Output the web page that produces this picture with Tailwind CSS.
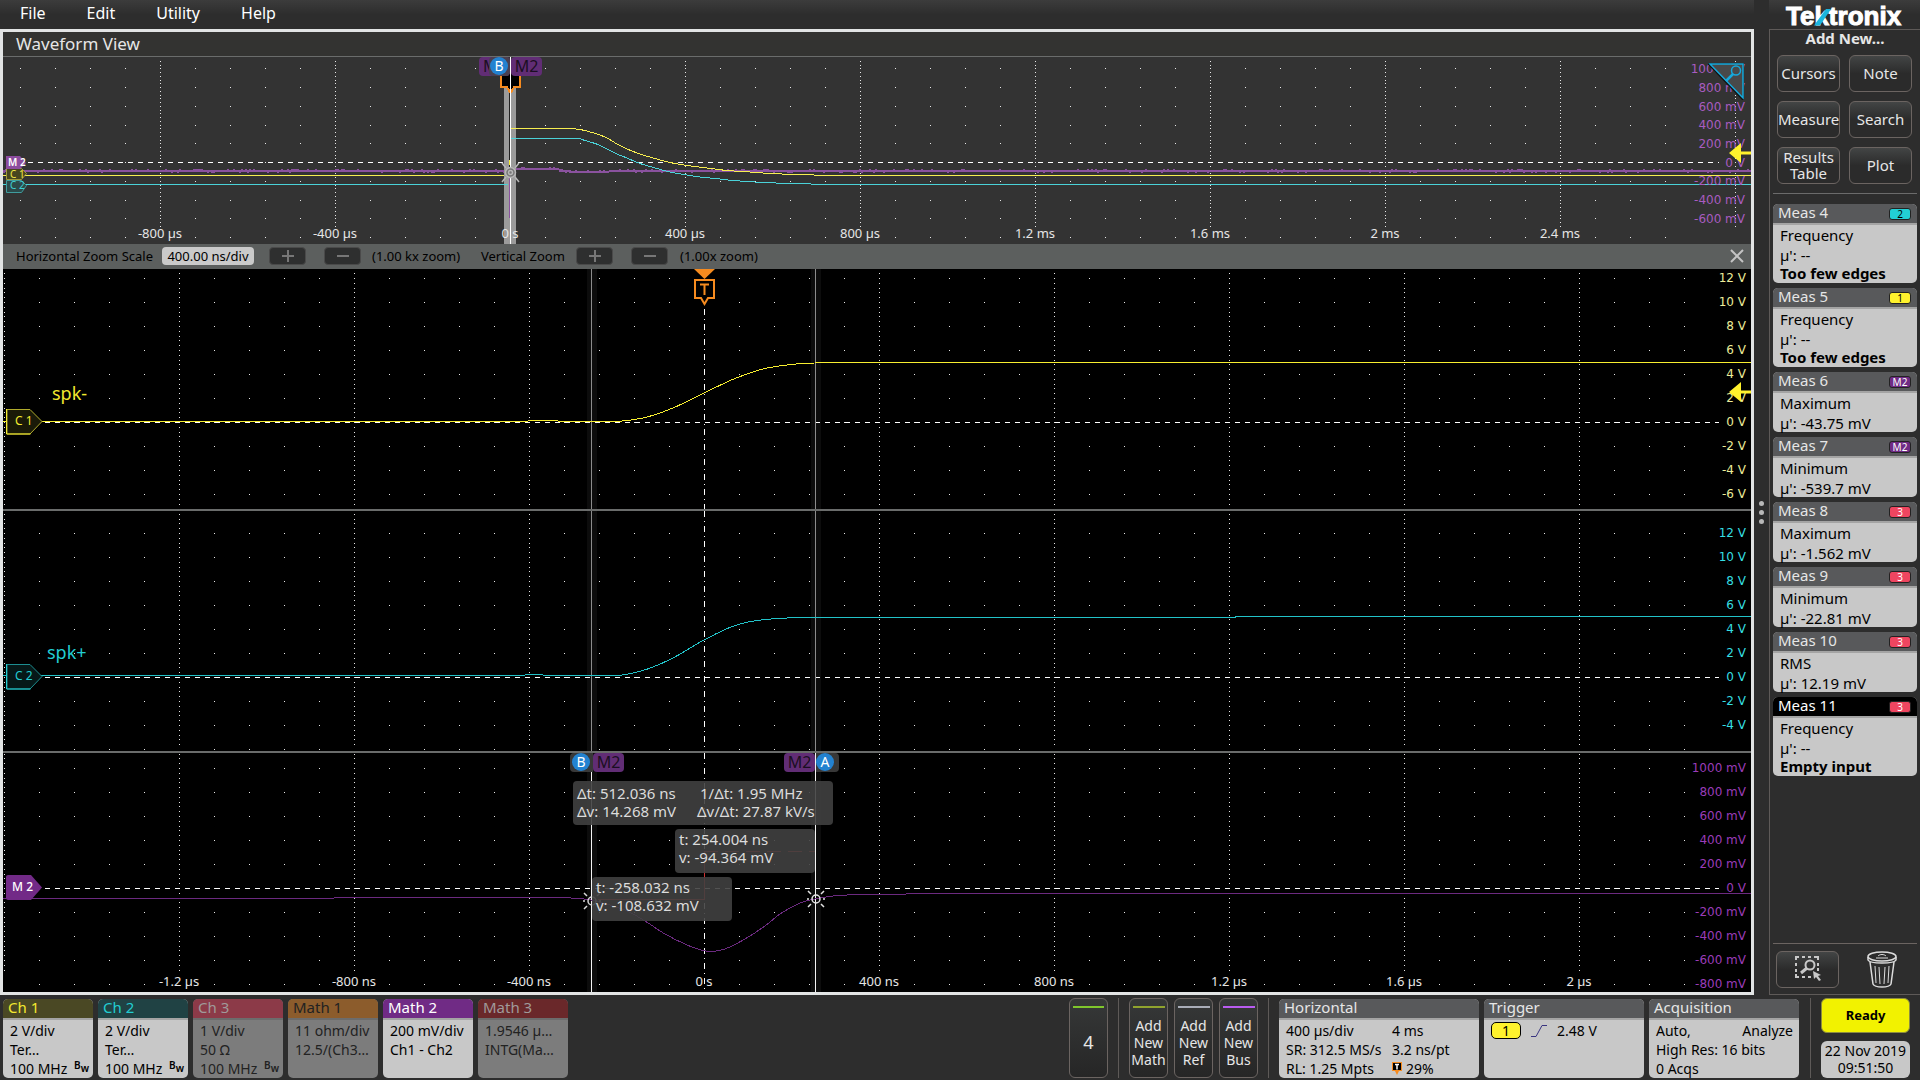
<!DOCTYPE html>
<html lang="en">
<head>
    <meta charset="UTF-8">
    <meta name="viewport" content="width=device-width, initial-scale=1.0">
    <title>Tektronix - Waveform View</title>
    <script src="https://cdn.jsdelivr.net/npm/@tailwindcss/browser@4"></script>
</head>
<body class="min-h-screen flex flex-col bg-[#2d2d2d] text-[#e6e6e6] font-['Noto_Sans',sans-serif] text-[14px] leading-[19px]">

    <div class="flex-1 flex">
        <!-- Left: menu and waveform view -->
        <div class="flex-1 min-w-0 flex flex-col">
            <nav class="h-[29px] flex items-center gap-[41px] pl-5 pb-[2px] text-[16px] text-white bg-linear-to-b from-[#3c3c3c] to-[#2d2d2d] to-50%">
                <a href="#">File</a>
                <a href="#">Edit</a>
                <a href="#">Utility</a>
                <a href="#">Help</a>
            </nav>

            <main class="flex-1 flex flex-col border-3 border-[#e2e4e4] bg-black">
                <h1 class="h-[25px] pl-[13px] text-[17px] leading-[24px] bg-[#333331] border-b border-[#6a6c6b]">Waveform View</h1>

                <!-- Overview -->
                <section class="relative h-[187px] bg-[#333]">
                    <svg id="overview" class="absolute inset-0 w-full h-full" viewBox="0 0 1748 187" preserveAspectRatio="none" fill="none" shape-rendering="crispEdges"></svg>
                    <ul id="overviewScale" class="absolute right-[6px] top-[3px] h-[168px] grid auto-rows-fr items-center text-right text-[12px] leading-[18px] text-[#a85cc0] font-['DejaVu_Sans',sans-serif]"></ul>
                    <div id="overviewTime" class="absolute inset-x-0 bottom-[2px] h-[18px] text-[13px] leading-[18px]"></div>

                    <div class="absolute left-[3px] top-[98px] text-[11px]">
                        <svg class="w-[22px] h-[40px]" viewBox="0 0 22 40">
                            <path d="M0.5 13.5h15l5 5-5 6h-15z" fill="#48461f" stroke="#a09a3a"/>
                            <path d="M0.5 25.5h15l5 5-5 7h-15z" fill="#2c4a4a" stroke="#3f9c9e"/>
                            <path d="M0 1h14l6 7-6 6H0z" fill="#8c4c9e"/>
                            <text x="2" y="11" font-size="10" font-weight="600" fill="#fff">M 2</text>
                            <text x="4" y="23" font-size="10" fill="#f2e84a">C 1</text>
                            <text x="4" y="34" font-size="10" fill="#3fd0d4">C 2</text>
                        </svg>
                    </div>

                    <div data-x="476" class="absolute top-0 w-[31px] h-[19px] rounded bg-[#612d75] text-[#1b0f22] text-[16px] leading-[18px] pl-[4px]">M</div>
                    <div data-x="486" class="absolute top-0 w-[21px] h-[19px] rounded bg-[#4a4050]"></div>
                    <div data-x="487" class="absolute top-0 size-[18px] rounded-full bg-[#2382d0] text-[14px] leading-[18px] text-center text-white">B</div>
                    <div data-x="508" class="absolute top-0 w-[31px] h-[19px] rounded bg-[#612d75] text-[#1b0f22] text-[16px] leading-[18px] text-center">M2</div>

                    <button class="absolute right-[7px] top-[6px]" aria-label="Zoom overview">
                        <svg class="w-[36px] h-[37px]" viewBox="0 0 36 37" fill="none">
                            <path d="M2 1h33v34z" fill="#48494a" stroke="#111" stroke-width="4"/>
                            <path d="M2 1h33v34z" fill="#48494a" stroke="#16a9dc" stroke-width="1.5"/>
                            <circle cx="28" cy="7.500" r="4.500" stroke="#16a9dc" stroke-width="1.5"/>
                            <path d="M25 11l-7 7" stroke="#16a9dc" stroke-width="2.5"/>
                        </svg>
                    </button>
                    <svg class="absolute right-0 top-[86px] w-[22px] h-[20px]" viewBox="0 0 22 20"><path d="M0 10L12 0v8.500h10v3H12V20z" fill="#fff22d"/></svg>
                </section>

                <!-- Zoom bar -->
                <div class="h-[25px] flex items-center pl-[13px] pr-[7px] pb-px bg-[#5c5f5e] text-[13px] text-black">
                    <label for="hscale" class="w-[146px]">Horizontal Zoom Scale</label>
                    <input id="hscale" value="400.00 ns/div" class="w-[92px] h-[18px] rounded-sm bg-[#cacaca] text-center text-[13px]">
                    <button class="ml-[15px] w-[37px] h-[18px] rounded-sm bg-[#2e2f2f] border border-[#4a4a4a] grid place-items-center" aria-label="Horizontal zoom in"><svg class="size-3" viewBox="0 0 12 12" stroke="#777" stroke-width="2"><path d="M6 0v12M0 6h12"/></svg></button>
                    <button class="ml-[18px] w-[37px] h-[18px] rounded-sm bg-[#2e2f2f] border border-[#4a4a4a] grid place-items-center" aria-label="Horizontal zoom out"><svg class="size-3" viewBox="0 0 12 12" stroke="#777" stroke-width="2"><path d="M0 6h12"/></svg></button>
                    <span class="ml-[11px] w-[109px]">(1.00 kx zoom)</span>
                    <span class="w-[95px]">Vertical Zoom</span>
                    <button class="w-[37px] h-[18px] rounded-sm bg-[#2e2f2f] border border-[#4a4a4a] grid place-items-center" aria-label="Vertical zoom in"><svg class="size-3" viewBox="0 0 12 12" stroke="#777" stroke-width="2"><path d="M6 0v12M0 6h12"/></svg></button>
                    <button class="ml-[18px] w-[37px] h-[18px] rounded-sm bg-[#2e2f2f] border border-[#4a4a4a] grid place-items-center" aria-label="Vertical zoom out"><svg class="size-3" viewBox="0 0 12 12" stroke="#777" stroke-width="2"><path d="M0 6h12"/></svg></button>
                    <span class="ml-3">(1.00x zoom)</span>
                    <button class="ml-auto" aria-label="Close zoom"><svg class="size-[14px]" viewBox="0 0 14 14" stroke="#c4c4c4" stroke-width="2"><path d="M1 1l12 12M13 1L1 13"/></svg></button>
                </div>

                <!-- Channel 1 -->
                <section class="relative flex-[240] min-h-[240px]">
                    <svg id="ch1" class="absolute inset-0 w-full h-full" viewBox="0 0 1748 240" preserveAspectRatio="none" fill="none" shape-rendering="crispEdges"></svg>
                    <ul id="ch1Scale" class="absolute right-[5px] -top-[3px] text-right text-[12px] leading-[24px] text-[#ecec9a] font-['DejaVu_Sans',sans-serif]"></ul>
                    <span class="absolute left-[49px] top-[112px] text-[18px] leading-[24px] text-[#f2e92f]">spk-</span>
                    <svg class="absolute left-[3px] top-[140px] w-[37px] h-[26px]" viewBox="0 0 37 26">
                        <path d="M1 0.500h23l12 12-12 12.500H1z" fill="#1a1a08" stroke="#b0aa2c"/><path d="M0.500 0v25h24" fill="none" stroke="#f5ec30"/>
                        <text x="9" y="16" font-size="12" fill="#f5ec30">C 1</text>
                    </svg>
                    <svg data-x="691" class="absolute top-0 w-[21px] h-[38px]" viewBox="0 0 21 38">
                        <path d="M0 0h21L10.500 10z" fill="#f68b1f"/>
                        <path d="M1 11h19v18h-6l-3.500 6L7 29H1z" fill="#000" stroke="#f68b1f" stroke-width="2"/>
                        <path d="M6 15.500h9M10.500 15v11" stroke="#f68b1f" stroke-width="2"/>
                    </svg>
                    <svg class="absolute right-0 top-[113px] w-[22px] h-[20px]" viewBox="0 0 22 20"><path d="M0 10L12 0v8.500h10v3H12V20z" fill="#fff22d"/></svg>
                </section>

                <!-- Channel 2 -->
                <section class="relative flex-[242] min-h-[242px] border-t-2 border-[#6a6c6b]">
                    <svg id="ch2" class="absolute inset-0 w-full h-full" viewBox="0 0 1748 240" preserveAspectRatio="none" fill="none" shape-rendering="crispEdges"></svg>
                    <ul id="ch2Scale" class="absolute right-[5px] top-[10px] text-right text-[12px] leading-[24px] text-[#35dfe2] font-['DejaVu_Sans',sans-serif]"></ul>
                    <span class="absolute left-[44px] top-[129px] text-[18px] leading-[24px] text-[#22cdd2]">spk+</span>
                    <svg class="absolute left-[3px] top-[153px] w-[37px] h-[26px]" viewBox="0 0 37 26">
                        <path d="M1 0.500h23l12 12-12 12.500H1z" fill="#061818" stroke="#1c8d90"/><path d="M0.500 0v25h24" fill="none" stroke="#22cdd2"/>
                        <text x="9" y="16" font-size="12" fill="#22cdd2">C 2</text>
                    </svg>
                </section>

                <!-- Math 2 -->
                <section class="relative flex-[241] min-h-[241px] border-t-2 border-[#6a6c6b]">
                    <svg id="math2" class="absolute inset-0 w-full h-full" viewBox="0 0 1748 239" preserveAspectRatio="none" fill="none" shape-rendering="crispEdges"></svg>
                    <ul id="math2Scale" class="absolute right-[5px] top-[3px] text-right text-[12px] leading-[24px] text-[#9a3cb8] font-['DejaVu_Sans',sans-serif]"></ul>
                    <div id="mainTime" class="absolute inset-x-0 bottom-[2px] h-[18px] text-[13px] leading-[18px]"></div>
                    <svg class="absolute left-[3px] top-[122px] w-[37px] h-[26px]" viewBox="0 0 37 26">
                        <path d="M0 2q0-2 2-2h23l11 12.500L25 25H2q-2 0-2-2z" fill="#722a87"/>
                        <text x="6" y="16" font-size="12" font-weight="500" fill="#fff">M 2</text>
                    </svg>

                    <svg data-x="579" class="absolute top-[138px] w-[20px] h-[20px]" viewBox="0 0 20 20" fill="none" stroke="#d8d8d8" stroke-width="1.500">
                        <circle cx="10" cy="10" r="4"/><path d="M2 2l3 3M18 2l-3 3M2 18l3-3M18 18l-3-3M1 10h2M17 10h2"/>
                    </svg>
                    <svg data-x="803" class="absolute top-[136px] w-[20px] h-[20px]" viewBox="0 0 20 20" fill="none" stroke="#e4e4e4" stroke-width="1.500">
                        <circle cx="10" cy="10" r="4"/><path d="M2 2l3 3M18 2l-3 3M2 18l3-3M18 18l-3-3M1 10h2M17 10h2"/>
                    </svg>

                    <div data-x="567" class="absolute top-0 w-[23px] h-[19px] rounded-l bg-[#383838] pl-[2px]"><div class="size-[18px] rounded-full bg-[#2382d0] text-[14px] leading-[18px] text-center text-white">B</div></div>
                    <div data-x="590" class="absolute top-0 w-[31px] h-[19px] rounded bg-[#612d75] text-[#1b0f22] text-[16px] leading-[18px] text-center">M2</div>
                    <div data-x="781" class="absolute top-0 w-[31px] h-[19px] rounded bg-[#612d75] text-[#1b0f22] text-[16px] leading-[18px] text-center">M2</div>
                    <div data-x="813" class="absolute top-0 w-[23px] h-[19px] rounded-r bg-[#383838]"><div class="size-[18px] rounded-full bg-[#2382d0] text-[14px] leading-[18px] text-center text-white">A</div></div>

                    <div data-x="570" class="absolute top-[28px] w-[260px] h-[44px] rounded bg-[#404040]/90 pl-[4px] pt-[3px] flex text-[15px] leading-[18px] text-[#dcdcdc] whitespace-nowrap">
                        <p class="w-[120px]">Δt: 512.036 ns<br>Δv: 14.268 mV</p>
                        <p><span class="pl-[3px]">1/Δt: 1.95 MHz</span><br>Δv/Δt: 27.87 kV/s</p>
                    </div>
                    <p data-x="672" class="absolute top-[76px] w-[140px] h-[44px] rounded bg-[#404040]/90 pl-[4px] pt-px text-[15px] leading-[18px] text-[#dcdcdc]">t: 254.004 ns<br>v: -94.364 mV</p>
                    <p data-x="589" class="absolute top-[124px] w-[140px] h-[44px] rounded bg-[#404040]/90 pl-[4px] pt-px text-[15px] leading-[18px] text-[#dcdcdc]">t: -258.032 ns<br>v: -108.632 mV</p>
                </section>
            </main>
        </div>

        <!-- Panel splitter -->
        <div class="w-[15px] pt-[29px] flex flex-col justify-center items-center gap-1">
            <i class="size-[5px] rounded-full bg-[#b8b8b8]"></i>
            <i class="size-[5px] rounded-full bg-[#b8b8b8]"></i>
            <i class="size-[5px] rounded-full bg-[#b8b8b8]"></i>
        </div>

        <!-- Right: results bar -->
        <aside class="w-[151px] flex flex-col">
            <div class="h-[29px] flex justify-center bg-linear-to-b from-[#3c3c3c] to-[#2d2d2d] to-50%">
                <svg class="w-[122px] h-[34px] shrink-0" viewBox="0 0 122 34" role="img" aria-label="Tektronix">
                    <text x="2" y="25" font-family="Liberation Sans, sans-serif" font-weight="700" font-size="26" fill="#fff" stroke="#fff" stroke-width="1">Tektronix</text>
                    <path d="M30 25.500L42 9h5L36 25.500z" fill="#1cb5dd"/>
                </svg>
            </div>
            <div class="flex-1 flex flex-col border-l border-y border-[#5e5a58] px-[3px]">
                <h2 class="text-center font-bold text-[15px] leading-[17px] mb-2">Add New...</h2>
                <div class="grid grid-cols-[63px_63px] gap-[9px] pl-1 pb-[9px] text-[15px] leading-[16px]">
                    <button class="h-[37px] rounded-md border border-[#6b6461] bg-linear-to-b from-[#434545] to-[#2b2b2b] to-50% pb-[2px]">Cursors</button>
                    <button class="h-[37px] rounded-md border border-[#6b6461] bg-linear-to-b from-[#434545] to-[#2b2b2b] to-50% pb-[2px]">Note</button>
                    <button class="h-[37px] rounded-md border border-[#6b6461] bg-linear-to-b from-[#434545] to-[#2b2b2b] to-50% pb-[2px]">Measure</button>
                    <button class="h-[37px] rounded-md border border-[#6b6461] bg-linear-to-b from-[#434545] to-[#2b2b2b] to-50% pb-[2px]">Search</button>
                    <button class="h-[37px] rounded-md border border-[#6b6461] bg-linear-to-b from-[#434545] to-[#2b2b2b] to-50% pb-[2px]">Results Table</button>
                    <button class="h-[37px] rounded-md border border-[#6b6461] bg-linear-to-b from-[#434545] to-[#2b2b2b] to-50% pb-[2px]">Plot</button>
                </div>
                <div id="measurements" class="flex flex-col gap-[5px] border-t border-[#6b6b6b] pt-[10px]"></div>
                <div class="mt-auto h-[51px] flex items-center justify-between border-t border-[#6b6461] pl-[3px] pr-5">
                    <button class="w-[63px] h-[37px] rounded-md border border-[#6b6461] bg-linear-to-b from-[#434545] to-[#2b2b2b] to-50% grid place-items-center" aria-label="Draw a box">
                        <svg class="w-[26px] h-[26px]" viewBox="0 0 26 26" fill="none" stroke="#c8c8c8" stroke-width="2">
                            <path d="M1 4V1h3M7 1h3M13 1h3M19 1h4v3M23 7v3M23 12v3M1 7v3M1 13v3M1 18v3h3M7 21h3M13 21h3"/>
                            <circle cx="15" cy="9" r="4.500"/><path d="M12 12l-6 5" stroke-width="3"/>
                            <path d="M18 15l8 4-3 1 3 4-2 1-3-4-2 2z" fill="#c8c8c8" stroke="none"/>
                        </svg>
                    </button>
                    <button aria-label="Trash">
                        <svg class="w-[30px] h-[37px]" viewBox="0 0 30 37" fill="none" stroke="#dcdcdc" stroke-width="1.500">
                            <ellipse cx="15" cy="5.500" rx="14" ry="4.500"/>
                            <path d="M1 6v3c2 4 26 4 28 0V6M3 11l3 22c2 4 16 4 18 0l3-22"/>
                            <path d="M8 15l1 17M12 16l1 17M18 16l-1 17M22 15l-1 17M11 5c2-2 6-2 8 0M9 7h12" stroke-width="1"/>
                        </svg>
                    </button>
                </div>
            </div>
        </aside>
    </div>

    <!-- Settings bar -->
    <footer class="h-[85px] flex justify-between pt-[3px] pb-[2px] pl-[3px] pr-[10px]">
        <div id="channels" class="flex gap-[5px]"></div>
        <div class="flex leading-[17px]">
            <button class="w-[39px] rounded-md border border-[#6b6461] bg-linear-to-b from-[#363838] to-[#262626] px-[3px] flex flex-col text-[18px]"><i class="block w-full h-[2px] mt-[7px] bg-[#7fc62c]"></i><span class="m-auto">4</span></button>
            <i class="w-px bg-[#5e5a58] mx-[10px]"></i>
            <div class="flex gap-[6px] text-[14px]">
                <button class="w-[39px] rounded-md border border-[#6b6461] bg-linear-to-b from-[#363838] to-[#262626] flex flex-col items-center"><i class="block w-[32px] h-[2px] mt-[7px] bg-[#8fa32e]"></i><span class="m-auto">Add<br>New<br>Math</span></button>
                <button class="w-[39px] rounded-md border border-[#6b6461] bg-linear-to-b from-[#363838] to-[#262626] flex flex-col items-center"><i class="block w-[32px] h-[2px] mt-[7px] bg-[#a9adb8]"></i><span class="m-auto">Add<br>New<br>Ref</span></button>
                <button class="w-[39px] rounded-md border border-[#6b6461] bg-linear-to-b from-[#363838] to-[#262626] flex flex-col items-center"><i class="block w-[32px] h-[2px] mt-[7px] bg-[#b95cf0]"></i><span class="m-auto">Add<br>New<br>Bus</span></button>
            </div>
            <i class="w-px bg-[#5e5a58] mx-[10px]"></i>
            <div class="flex gap-[5px] pt-px leading-[19px] text-black">
                <section class="w-[200px] rounded-[5px] bg-[#c8c8c8]">
                    <h3 class="h-[21px] rounded-t-[5px] pl-[5px] text-[15px] leading-[17px] text-[#e6e6e6] bg-[#58595b] border-b-2 border-[#a4a4a4]">Horizontal</h3>
                    <div class="grid grid-cols-[106px_1fr] pl-[7px] pt-px">
                        <span>400 µs/div</span><span>4 ms</span>
                        <span>SR: 312.5 MS/s</span><span>3.2 ns/pt</span>
                        <span>RL: 1.25 Mpts</span>
                        <span class="flex items-center gap-1"><svg class="w-[10px] h-[13px]" viewBox="0 0 10 13"><path d="M0 0h10v9H7l-2 4-2-4H0z" fill="#f68b1f"/><path d="M1 1h8v7H1z" fill="#000"/><path d="M3 2.500h4M5 2v5.500" stroke="#fff" stroke-width="1.500"/></svg>29%</span>
                    </div>
                </section>
                <section class="w-[160px] rounded-[5px] bg-[#c8c8c8]">
                    <h3 class="h-[21px] rounded-t-[5px] pl-[5px] text-[15px] leading-[17px] text-[#e6e6e6] bg-[#58595b] border-b-2 border-[#a4a4a4]">Trigger</h3>
                    <div class="flex items-center pl-[7px] pt-px">
                        <span class="w-[30px] h-[17px] rounded-[5px] border border-black bg-[#fff22d] text-center leading-[15px]">1</span>
                        <svg class="ml-[10px] w-[16px] h-[12px]" viewBox="0 0 16 12" fill="none" stroke="#3a3580"><path d="M0 11.500h5L11 0.500h5"/></svg>
                        <span class="ml-[10px]">2.48 V</span>
                    </div>
                </section>
                <section class="w-[150px] rounded-[5px] bg-[#c8c8c8]">
                    <h3 class="h-[21px] rounded-t-[5px] pl-[5px] text-[15px] leading-[17px] text-[#e6e6e6] bg-[#58595b] border-b-2 border-[#a4a4a4]">Acquisition</h3>
                    <div class="pl-[7px] pr-[6px] pt-px">
                        <p class="flex justify-between"><span>Auto,</span><span>Analyze</span></p>
                        <p>High Res: 16 bits</p>
                        <p>0 Acqs</p>
                    </div>
                </section>
            </div>
            <i class="w-px bg-[#5e5a58] ml-[11px] mr-[10px]"></i>
            <div class="w-[89px] flex flex-col justify-between text-black text-center">
                <button class="h-[35px] rounded-md bg-[#f2f200] border border-[#8c8c40] font-bold text-[13px]">Ready</button>
                <time class="block h-[37px] rounded-md bg-[#c8c8c8] pt-px">22 Nov 2019<br>09:51:50</time>
            </div>
        </div>
    </footer>

    <script>
        const PLOT_W = 1748;
        const MAIN_CENTER = 701;      // 0 s in the zoomed view
        const OVERVIEW_CENTER = 507;  // 0 s in the overview
        const MINOR = 35;             // 5 minor divisions per major one

        const measurements = [
            { id: 4, src: "2", color: "bg-[#22cfd4] text-black", name: "Frequency", value: "--", note: "Too few edges" },
            { id: 5, src: "1", color: "bg-[#fff22d] text-black", name: "Frequency", value: "--", note: "Too few edges" },
            { id: 6, src: "M2", color: "bg-[#702b85] text-white", name: "Maximum", value: "-43.75 mV" },
            { id: 7, src: "M2", color: "bg-[#702b85] text-white", name: "Minimum", value: "-539.7 mV" },
            { id: 8, src: "3", color: "bg-[#ef4560] text-white", name: "Maximum", value: "-1.562 mV" },
            { id: 9, src: "3", color: "bg-[#ef4560] text-white", name: "Minimum", value: "-22.81 mV" },
            { id: 10, src: "3", color: "bg-[#ef4560] text-white", name: "RMS", value: "12.19 mV" },
            { id: 11, src: "3", color: "bg-[#ef4560] text-white", name: "Frequency", value: "--", note: "Empty input", active: true }
        ];

        const channels = [
            { name: "Ch 1", head: "bg-[#4a4824] text-[#f2e92f]", body: "bg-[#c8c8c8] text-black border-[#a4a4a4]", lines: ["2 V/div", "Ter…"], bw: "100 MHz" },
            { name: "Ch 2", head: "bg-[#204244] text-[#22cdd2]", body: "bg-[#c8c8c8] text-black border-[#a4a4a4]", lines: ["2 V/div", "Ter…"], bw: "100 MHz" },
            { name: "Ch 3", head: "bg-[#8c3a48] text-[#a09a9a]", body: "bg-[#7c7c7c] text-[#222] border-[#6c6c6c]", lines: ["1 V/div", "50 Ω"], bw: "100 MHz" },
            { name: "Math 1", head: "bg-[#8c5c2c] text-[#222]", body: "bg-[#7c7c7c] text-[#222] border-[#6c6c6c]", lines: ["11 ohm/div", "12.5/(Ch3…"] },
            { name: "Math 2", head: "bg-[#702b85] text-white", body: "bg-[#c8c8c8] text-black border-[#a4a4a4]", lines: ["200 mV/div", "Ch1 - Ch2"] },
            { name: "Math 3", head: "bg-[#6a282a] text-[#a09a9a]", body: "bg-[#7c7c7c] text-[#222] border-[#6c6c6c]", lines: ["1.9546 µ…", "INTG(Ma…"] }
        ];

        document.getElementById("measurements").innerHTML = measurements.map(m => `
            <section class="rounded-[5px] bg-[#c8c8c8] text-black ${m.note ? "h-[79px]" : "h-[60px]"}">
                <h3 class="h-[21px] rounded-t-[5px] flex items-center justify-between pl-[5px] pr-[6px] text-[15px] leading-[17px] border-b-2 border-[#a4a4a4] ${m.active ? "bg-black text-white" : "bg-[#58595b] text-[#e6e6e6]"}">
                    <span class="pb-[2px]">Meas ${m.id}</span><span class="w-[22px] h-[12px] rounded-[3px] border border-[#222] text-[10px] leading-[10px] text-center ${m.color}">${m.src}</span>
                </h3>
                <div class="pl-[7px] pt-px text-[15px]"><p>${m.name}</p><p class="leading-[20px]">µ': ${m.value}</p>${m.note ? `<p class="font-bold leading-[17px]">${m.note}</p>` : ""}</div>
            </section>`).join("");

        document.getElementById("channels").innerHTML = channels.map(c => `
            <section class="w-[90px] mt-px rounded-[5px] ${c.body}">
                <h3 class="h-[19px] rounded-t-[5px] pl-[5px] text-[15px] leading-[17px] ${c.head}">${c.name}</h3>
                <div class="border-t-2 border-inherit pl-[7px] pt-px whitespace-nowrap">
                    ${c.lines.map(l => `<p>${l}</p>`).join("")}
                    ${c.bw ? `<p class="flex justify-between pr-1">${c.bw}<span class="flex text-[10px] leading-[12px] font-semibold">B<span class="pt-[3px]">w</span></span></p>` : ""}
                </div>
            </section>`).join("");

        function fillScale(id, labels) {
            document.getElementById(id).innerHTML = labels.map(l => `<li>${l}</li>`).join("");
        }
        const mv = n => (n === 0 ? "0 V" : n + " mV");
        const range = (from, to, step) => {
            const out = [];
            for (let v = from; v >= to; v -= step) out.push(v);
            return out;
        };
        fillScale("overviewScale", range(1000, -600, 200).map(mv));
        fillScale("ch1Scale", range(12, -6, 2).map(v => v + " V"));
        fillScale("ch2Scale", range(12, -4, 2).map(v => v + " V"));
        fillScale("math2Scale", range(1000, -800, 200).map(mv));

        function fillTime(id, center, first, labels) {
            document.getElementById(id).innerHTML = labels.map((l, i) =>
                `<span class="absolute -translate-x-1/2" style="left:${(center + (first + i) * MINOR * 5) / PLOT_W * 100}%">${l}</span>`).join("");
        }
        fillTime("overviewTime", OVERVIEW_CENTER, -2, ["-800 µs", "-400 µs", "0 s", "400 µs", "800 µs", "1.2 ms", "1.6 ms", "2 ms", "2.4 ms"]);
        fillTime("mainTime", MAIN_CENTER, -3, ["-1.2 µs", "-800 ns", "-400 ns", "0 s", "400 ns", "800 ns", "1.2 µs", "1.6 µs", "2 µs"]);

        // Minor dots, dotted major lines and the dashed 0 V line
        function grid(center, zero, dy, height, maxX, lineEnd, dashFrom) {
            const px = (x, y) => `M${x} ${y}h1v1h-1z`;
            let d = "";
            const start = center % MINOR;
            for (let x = start; x < PLOT_W; x += MINOR) {
                const major = (x - center) % (MINOR * 5) === 0;
                if (major) {
                    if (x === center) continue;
                    for (let k = -60; k < 60; k++) {
                        const y = Math.round(zero + k * dy / 5);
                        if (y > 0 && y < lineEnd) d += px(x, y);
                    }
                } else if (x <= maxX) {
                    for (let k = -12; k < 12; k++) {
                        const y = Math.round(zero + k * dy);
                        if (y > 0 && y < height) d += px(x, y);
                    }
                }
            }
            return `<path d="${d}" fill="#e8e8e8"/><path d="M${dashFrom} ${zero + 0.5}H1716" stroke="#fff" stroke-dasharray="5 5"/>`;
        }
        // Smooth curve through the sampled points
        function trace(points, color) {
            let d = `M${points[0][0]} ${points[0][1]}`;
            for (let i = 0; i < points.length - 1; i++) {
                const p0 = points[i - 1] || points[i], p1 = points[i], p2 = points[i + 1], p3 = points[i + 2] || p2;
                const t = (p2[0] - p1[0]) / 3;
                const slope = (a, b) => (b[0] === a[0] ? 0 : (b[1] - a[1]) / (b[0] - a[0]));
                const flat = p1[1] === p2[1];
                const s1 = flat || p0[1] === p1[1] ? 0 : slope(p0, p2);
                const s2 = flat || p3[1] === p2[1] ? 0 : slope(p1, p3);
                d += `C${p1[0] + t} ${p1[1] + s1 * t} ${p2[0] - t} ${p2[1] - s2 * t} ${p2[0]} ${p2[1]}`;
            }
            return `<path d="${d}" stroke="${color}"/>`;
        }
        const shade = `<path d="M584 0h10v240h-10zM808 0h10v240h-10z" fill="#0c0c0c"/>`;
        const cursors = color => `<path d="M588.5 0V240M812.5 0V240" stroke="${color}"/>`;
        const trigger = from => `<path d="M701.5 ${from}V240" stroke="#fff" stroke-dasharray="6 4 1 4"/>`;

        document.getElementById("ch1").innerHTML = shade + grid(MAIN_CENTER, 153, 24, 234, 1700, 236, 42) + trigger(40) + cursors("#8c8c8c") +
            trace([[0, 152.5], [520, 152.5], [530, 151.5], [550, 151.5], [560, 152.5], [609, 152.5], [628, 151], [646, 147.5], [670, 139], [701, 124], [732, 109.5], [762, 99.5], [793, 95], [812, 94], [915, 93.5], [1748, 93.5]], "#f7ee30");
        document.getElementById("ch2").innerHTML = shade + grid(MAIN_CENTER, 166, 24, 240, 1700, 236, 42) + trigger(0) + cursors("#8c8c8c") +
            trace([[0, 164.5], [515, 164.5], [530, 163.5], [550, 164.5], [612, 164.5], [628, 162.5], [646, 157.5], [670, 147], [701, 129], [732, 114.5], [762, 108.5], [812, 106.5], [1230, 106.5], [1235, 105.5], [1748, 105.5]], "#22c2c8");
        document.getElementById("math2").innerHTML = shade + grid(MAIN_CENTER, 135, 24, 236, 1684, 220, 42) + trigger(0) + cursors("#f4f4f4") +
            `<path d="M701 98.500H812" stroke="#d03030" stroke-dasharray="14 7"/><path d="M595 146.500H701V98" stroke="#d03030"/>` +
            trace([[0, 145.5], [120, 145.5], [510, 144.5], [563, 144.8], [588, 147], [622, 157], [642, 168], [662, 181], [684, 192], [698, 197], [709, 198.5], [722, 196], [742, 186], [762, 173], [777, 161], [797, 150], [812, 146], [835, 142.5], [870, 141.5], [960, 140.5], [1748, 140.5]], "#6c2a80");

        // Overview: noisy math trace under both channels
        let seed = 7;
        const rnd = () => (seed = (seed * 16807) % 2147483647) / 2147483647;
        let noise = "";
        for (let x = 0; x < PLOT_W; x += 2) {
            let y = 113;
            if (x > 507 && x < 555) y = 111;
            if (x > 565 && x < 605) y = 114;
            const j = rnd();
            noise += `M${x} ${y}h2v2h-2z`;
            if (j > 0.85) noise += `M${x} ${y - 1}h2v1h-2z`;
            if (j < 0.1) noise += `M${x} ${y + 2}h2v1h-2z`;
        }
        document.getElementById("overview").innerHTML = grid(OVERVIEW_CENTER, 105, 18.75, 186, 1664, 170, 25) +
            `<path d="${noise}" fill="#8a529e"/>` +
            `<path d="M501 30h12v157h-12z" fill="#9b9b9b"/><path d="M506 118h1v43h-1z" fill="#8a529e"/>` +
            trace([[0, 118.5], [501, 118.5]], "#f7ee50") + trace([[0, 127.5], [505, 127.5]], "#4ad2d8") +
            trace([[508, 71.5], [564, 71.5], [577, 72.5], [594, 77], [604, 81], [614, 87], [624, 92], [637, 97], [650, 101], [667, 105.5], [684, 108.5], [704, 111], [724, 113.5], [747, 115], [767, 116.5], [794, 117.5], [837, 118.5], [1748, 118.5]], "#f7ee50") +
            trace([[508, 81.5], [575, 81.5], [582, 83.5], [595, 87.5], [604, 92], [614, 97], [624, 101], [637, 106.5], [654, 111.5], [667, 115], [684, 118], [697, 120], [717, 122], [730, 123.5], [760, 125.5], [790, 126.5], [837, 127.5], [1748, 127.5]], "#4ad2d8") +
            `<path d="M498 12v18h6l3.500 6 3.500-6h6V12z" fill="#000" stroke="#f68b1f" stroke-width="2"/>` +
            `<path d="M506.500 36V118" stroke="#222"/><path d="M507.500 0V187" stroke="#fff"/><path d="M506.500 103v5" stroke="#f7ee30"/>` +
            `<g stroke="#b8b8b8" stroke-width="1.500" shape-rendering="auto"><circle cx="507.500" cy="115.500" r="5" fill="#777"/><circle cx="507.500" cy="115.500" r="2"/><path d="M499 106l4 5M516 106l-4 5M499 125l4-5M516 125l-4-5"/></g>`;

        // Pin markers to their place on the time axis
        document.querySelectorAll("[data-x]").forEach(el => {
            el.style.left = el.dataset.x / PLOT_W * 100 + "%";
        });
    </script>
</body>
</html>
